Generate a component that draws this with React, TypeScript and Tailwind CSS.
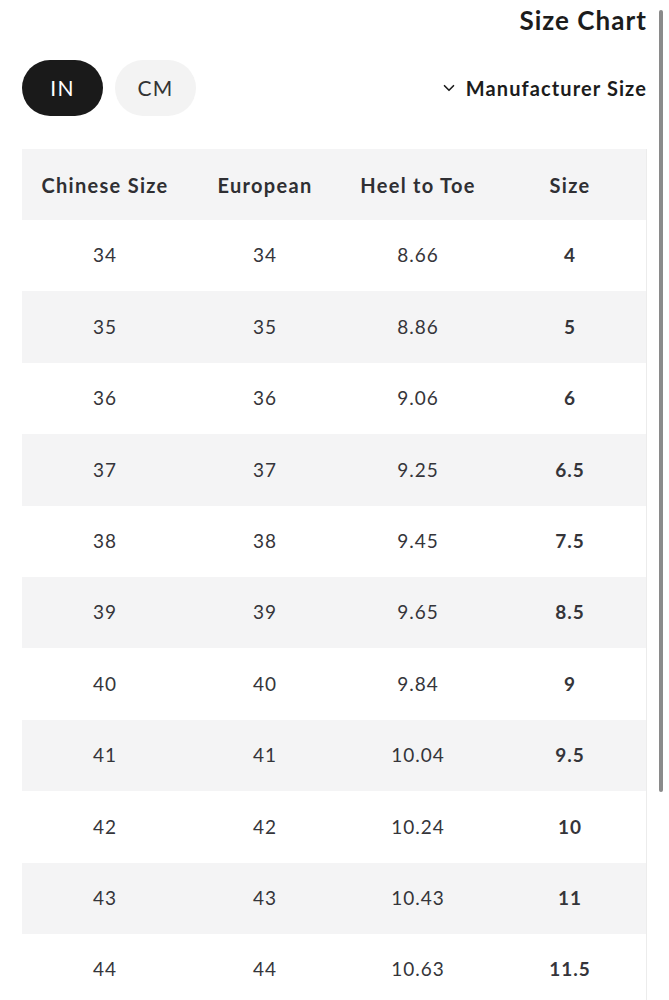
import { ChevronDown } from "lucide-react"

const rows = [
  ["34", "34", "8.66", "4"],
  ["35", "35", "8.86", "5"],
  ["36", "36", "9.06", "6"],
  ["37", "37", "9.25", "6.5"],
  ["38", "38", "9.45", "7.5"],
  ["39", "39", "9.65", "8.5"],
  ["40", "40", "9.84", "9"],
  ["41", "41", "10.04", "9.5"],
  ["42", "42", "10.24", "10"],
  ["43", "43", "10.43", "11"],
  ["44", "44", "10.63", "11.5"],
]

const cols = "grid grid-cols-[166px_154px_152px_1fr] items-center text-center"

export default function App() {
  return (
    <div className="relative h-[1000px] overflow-hidden bg-white text-[#35353a] font-['Lato',sans-serif]">
      {/* scroll indicator */}
      <div className="absolute left-[659px] top-[10px] h-[782px] w-[4px] rounded-full bg-[#8a8a8a]" />

      <div className="px-[22px]">
        <h1 className="pt-[4px] text-right text-[26px] font-bold leading-[32px] tracking-[0.04em] text-[#1c1c1c]">
          Size Chart
        </h1>

        <div className="mt-[24px] flex items-center justify-between">
          <div className="flex gap-3">
            <button className="h-[56px] w-[81px] rounded-full bg-[#1a1a1a] text-[21px] tracking-[0.06em] text-white">
              IN
            </button>
            <button className="h-[56px] w-[81px] rounded-full bg-[#f3f3f3] text-[21px] tracking-[0.06em] text-[#333]">
              CM
            </button>
          </div>
          <div className="flex items-center gap-[8px] text-[20px] font-bold tracking-[0.055em] text-[#1c1c1c]">
            <ChevronDown className="h-[18px] w-[18px]" strokeWidth={2.2} />
            <span>Manufacturer Size</span>
          </div>
        </div>

        <div className="mt-[33px] border-r border-[#ececec]">
          <div className={`${cols} h-[71px] bg-[#f4f4f5] text-[20px] font-bold tracking-[0.065em] text-[#2f2f33]`}>
            <div>Chinese Size</div>
            <div>European</div>
            <div>Heel to Toe</div>
            <div>Size</div>
          </div>
          {rows.map((r, i) => (
            <div
              key={r[0]}
              className={`${cols} h-[71.4px] text-[19px] tracking-[0.05em] ${i % 2 === 1 ? "bg-[#f4f4f5]" : "bg-white"}`}
            >
              <div>{r[0]}</div>
              <div>{r[1]}</div>
              <div>{r[2]}</div>
              <div className="font-bold">{r[3]}</div>
            </div>
          ))}
        </div>
      </div>
    </div>
  )
}
